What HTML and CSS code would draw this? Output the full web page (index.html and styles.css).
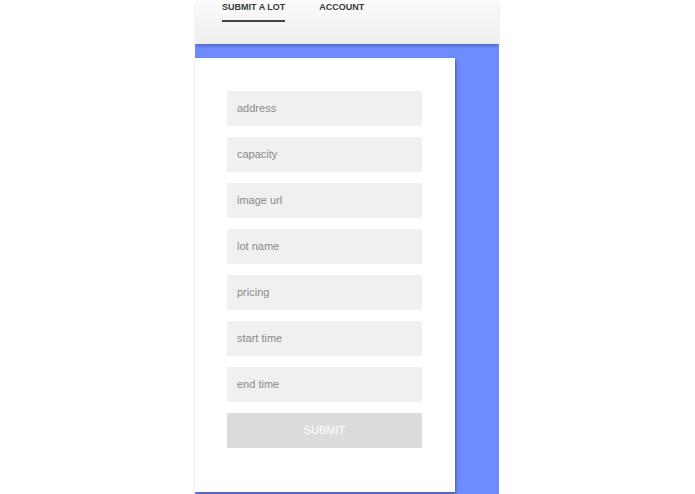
FILE: index.html
```html
<!DOCTYPE html>
<html>
<head>
<meta charset="utf-8">
<link rel="stylesheet" href="styles.css">
</head>
<body>
<div class="app">
  <header class="header">
    <nav class="nav">
      <a class="nav-item active">SUBMIT A LOT</a>
      <a class="nav-item">ACCOUNT</a>
    </nav>
  </header>
  <main class="main">
    <form class="card">
      <input class="field" placeholder="address">
      <input class="field" placeholder="capacity">
      <input class="field" placeholder="image url">
      <input class="field" placeholder="lot name">
      <input class="field" placeholder="pricing">
      <input class="field" placeholder="start time">
      <input class="field" placeholder="end time">
      <button class="submit" type="button">SUBMIT</button>
    </form>
  </main>
</div>
</body>
</html>
```

FILE: styles.css
```css
html, body {
  margin: 0;
  padding: 0;
  background: #ffffff;
  font-family: "Liberation Sans", Arial, sans-serif;
  overflow: hidden;
}
body {
  padding-right: 1px;
}
.app {
  width: 304px;
  margin: 0 auto;
  height: 494px;
  display: flex;
  flex-direction: column;
}
.header {
  height: 44px;
  flex: none;
  background: linear-gradient(#fbfbfb, #eeeeee);
  box-shadow: 0 3px 3px -1px rgba(0,0,0,0.25);
  position: relative;
  z-index: 2;
}
.nav {
  display: flex;
  gap: 34px;
  padding-left: 27px;
}
.nav-item {
  font-size: 9px;
  font-weight: bold;
  color: #3a3a3a;
  padding-top: 2px;
  height: 18px;
  display: block;
}
.nav-item.active {
  border-bottom: 2px solid #444;
}
.main {
  flex: 1;
  background: #6e8cff;
  padding-top: 14px;
}
.card {
  width: 260px;
  height: 434px;
  box-sizing: border-box;
  background: #fff;
  padding: 33px 33px 0 32px;
  display: flex;
  flex-direction: column;
  gap: 11px;
  box-shadow: 1px 2px 3px rgba(0,0,0,0.35);
  margin: 0;
}
.field {
  height: 35px;
  box-sizing: border-box;
  border: none;
  background: #f0f0f0;
  padding: 0 10px 2px;
  font-family: "Liberation Sans", Arial, sans-serif;
  font-size: 11px;
  color: #555;
  outline: none;
  width: 195px;
}
.field::placeholder {
  color: #8a8a8a;
}
.submit {
  height: 35px;
  border: none;
  background: #dcdcdc;
  color: #fff;
  font-family: "Liberation Sans", Arial, sans-serif;
  font-size: 11px;
  width: 195px;
  padding: 0 0 1px;
}
```
